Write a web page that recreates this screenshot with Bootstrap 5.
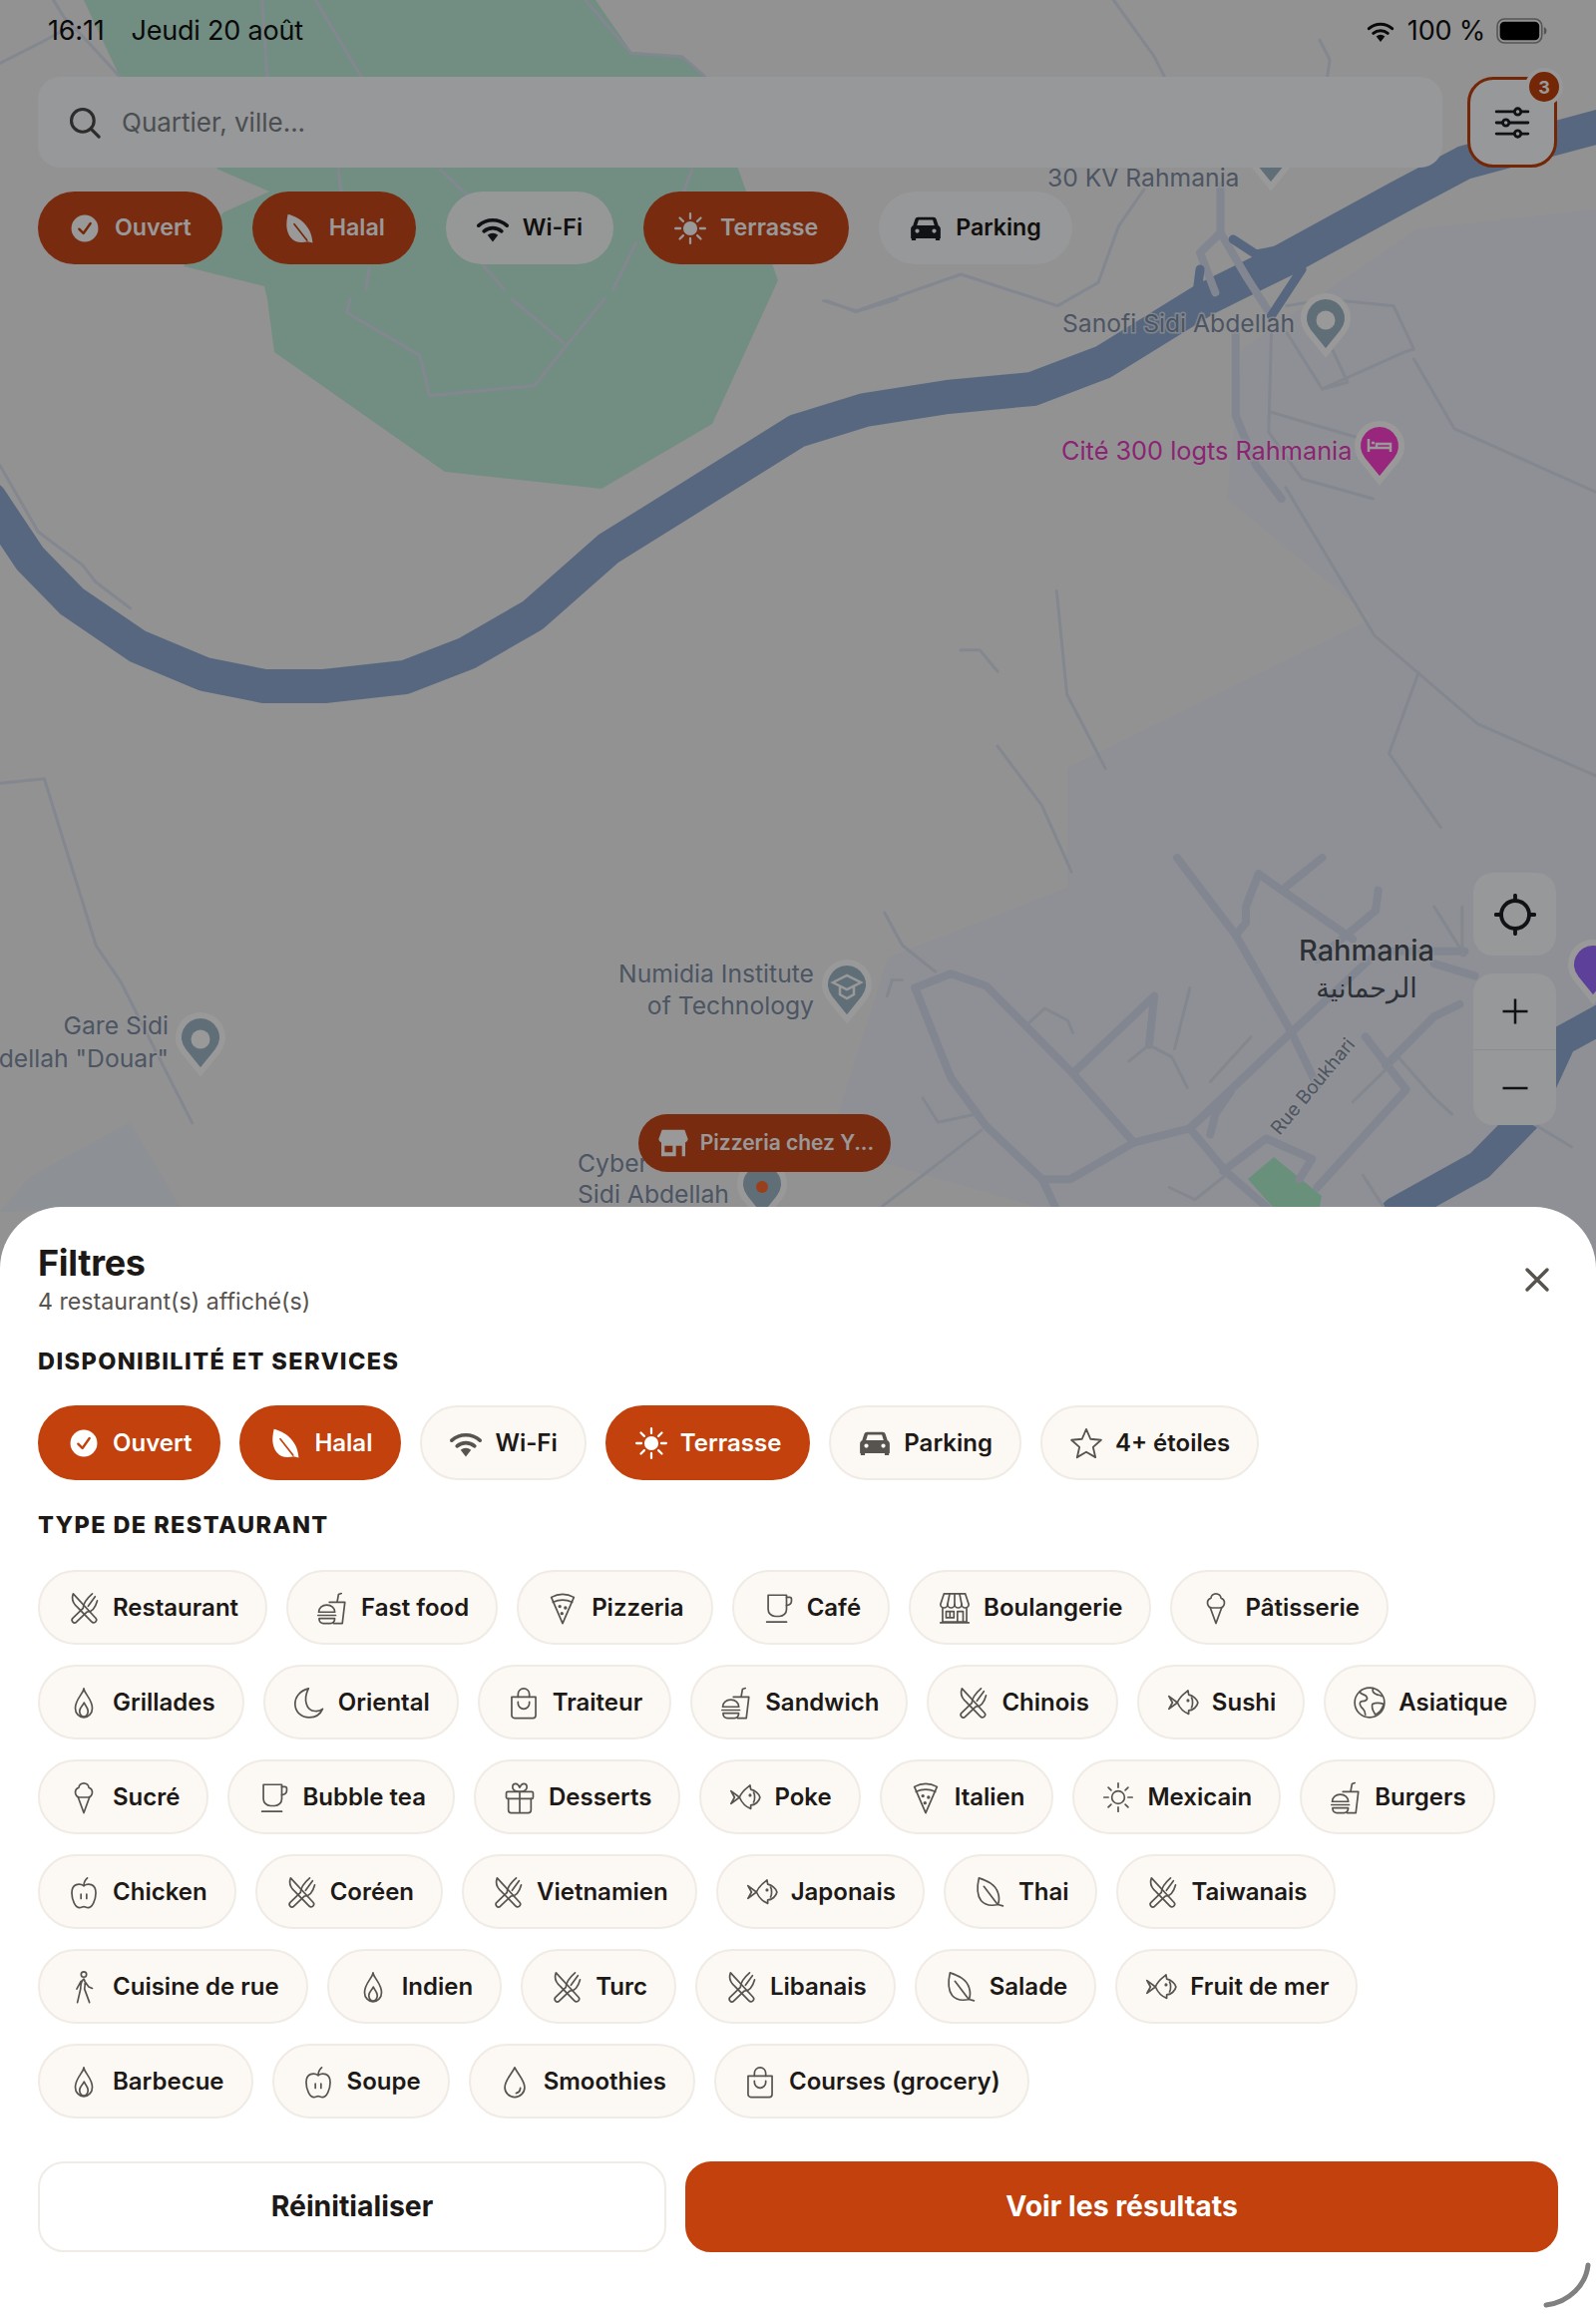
<!DOCTYPE html>
<html lang="fr">
<head>
    <meta charset="UTF-8">
    <meta name="viewport" content="width=device-width, initial-scale=1.0">
    <title>Filtres restaurants</title>
    <link href="https://cdn.jsdelivr.net/npm/bootstrap@5.3.0/dist/css/bootstrap.min.css" rel="stylesheet">
    <style>
        body { font-family: Inter, "Liberation Sans", sans-serif; color: #1c1917; overflow: hidden; background: #fff; }
        .screen { height: 2322px; position: relative; overflow: hidden; }

        /* map layer */
        .map-canvas { position: absolute; top: 0; left: 0; width: 1600px; height: 1300px; background: #f3f3f3; }
        .map-canvas polyline { fill: none; stroke-linejoin: round; stroke-linecap: round; vector-effect: non-scaling-stroke; }
        .road-thick polyline { stroke: #d9dff0; stroke-width: 8; }
        .road-thin polyline { stroke: #dbe1f0; stroke-width: 3; }
        .road-ramp polyline { stroke: #8facd4; stroke-width: 9; }
        .map-lbl { font-family: Inter, "Liberation Sans", sans-serif; font-size: 24.7px; fill: #808ea6; paint-order: stroke; stroke: #f6f7fa; stroke-width: 3px; stroke-opacity: .7; }
        .map-lbl.magenta { fill: #e83cc0; font-size: 25.3px; }
        .map-lbl.city { font-size: 29px; font-weight: 500; fill: #4a515c; }
        .map-lbl.street { font-size: 19px; }
        .map-ar { font-family: "DejaVu Sans", sans-serif; font-size: 27px; fill: #4a515c; }
        .map-dim { position: absolute; top: 0; left: 0; right: 0; bottom: 0; background: rgba(0, 0, 0, .4); z-index: 3; }

        .place-tag { position: absolute; left: 640px; top: 1117px; height: 58px; width: 253px; background: #c9481a; color: #fff; font-size: 21px; font-weight: 600; z-index: 2; gap: 9px; }
        .place-tag svg { width: 36px; height: 32px; }
        .map-tools { position: absolute; left: 1477px; top: 875px; width: 83px; z-index: 2; gap: 18px; }
        .tool-box { background: #fcfdff; border-radius: 20px; color: #1c1f24; }
        .tool-btn { height: 83px; }
        .tool-btn.tall { height: 76px; }
        .tool-btn + .tool-btn { border-top: 1px solid #e9ebf1; }

        /* status bar */
        .status-line { position: relative; z-index: 4; height: 62px; padding: 0 48px; font-size: 27px; color: #0a0a0a; letter-spacing: -.2px; }
        .status-line .day { margin-left: 27px; }
        .status-right { gap: 11px; }
        .battery { width: 52px; height: 26px; }

        /* top bar */
        .top-area { position: relative; z-index: 2; padding: 15px 39px 0 38px; }
        .search-box { height: 91px; flex: 1; background: #fcfdff; border-radius: 22px; padding: 0 30px; gap: 20px; font-size: 26px; color: #7d8288; margin-right: 25px; }
        .search-box svg { width: 34px; height: 34px; color: #4a4a4c; }
        .filter-btn { width: 90px; height: 91px; background: #fcfdff; border: 3px solid #c2410c; border-radius: 26px; color: #1c1f24; }
        .filter-btn svg { width: 38px; height: 38px; }
        .count-dot { position: absolute; top: -12px; right: -9px; width: 38px; height: 38px; border-radius: 50%; background: #c2410c; border: 4px solid #fcfdff; color: #fff; font-size: 18px; font-weight: 700; }
        .map-chips { margin-top: 24px; gap: 30px; }
        .map-chips .fchip { height: 73px; border: 0; padding: 0 31px 0 30px; background: rgba(252, 253, 255, .97); gap: 13px; font-size: 23.2px; }
        .map-chips .fchip.on { background: #c9481a; }
        .map-chips .ico { color: #1c1f24; }
        .map-chips .on .ico { color: #fff; }

        /* sheet */
        .sheet { position: absolute; left: 0; right: 0; top: 1210px; bottom: 0; background: #fff; border-radius: 62px 62px 0 0; z-index: 5; padding: 34px 38px 0; }
        .sheet-title { font-size: 36px; line-height: 44px; font-weight: 700; letter-spacing: -.3px; margin: 0; }
        .sheet-sub { font-size: 23.2px; line-height: 30px; color: #57534e; margin: 2px 0 0; }
        .close-x { width: 30px; height: 30px; padding: 0; border: 0; background: none; color: #57534e; position: absolute; right: 44px; top: 58px; }
        .sect-head { font-size: 23.5px; line-height: 30px; font-weight: 800; letter-spacing: 1.4px; margin: 30px 0 29px; }
        .chip-wrap { gap: 19px; }
        .chip-wrap.grid-like { gap: 20px 19px; margin-top: 30px; }

        .fchip { height: 75px; padding: 0 27px; border: 2px solid #f0ebe5; background: #fcf8f3; border-radius: 38px; font-size: 24px; font-weight: 600; color: #1c1917; gap: 12px; }
        .fchip:hover { background: #fcf8f3; color: #1c1917; border-color: #f0ebe5; }
        .fchip.on, .fchip.on:hover { background: #c2410c; border-color: #c2410c; color: #fff; }
        .ico { width: 34px; height: 34px; flex: none; color: #57534e; }
        .fchip.on .ico { color: #fff; }

        .sheet-actions { margin-top: 43px; gap: 19px; }
        .act-btn { height: 91px; border-radius: 26px; font-size: 28.4px; font-weight: 700; }
        .act-reset { width: 630px; background: #fff; border: 2px solid #f0ebe5; color: #1c1917; }
        .act-go { flex: 1; background: #c2410c; border: 2px solid #c2410c; color: #fff; }
        .act-go:hover { background: #c2410c; color: #fff; }
        .grip { position: absolute; right: 4px; bottom: 8px; width: 50px; height: 46px; }
    </style>
</head>
<body>
    <!-- icon set -->
    <svg width="0" height="0" class="position-absolute">
        <defs>
            <symbol id="i-fork" viewBox="0 0 24 24"><g fill="none" stroke="currentColor" stroke-width="1.2" stroke-linejoin="round" stroke-linecap="round"><path d="M4.5 2C3.2 5.5 4.5 9 7.5 11.5L17.5 21.8a1.9 1.9 0 0 0 2.9-2.6z"/><path d="M11.5 12.3 4 19.5a1.9 1.9 0 0 0 2.6 2.7l7.600-7.300M14.200 14.900c3.500 0 6-3 7.300-7.900M11.500 12.300c0-3.300 2.500-6.800 6.500-10.300M15.100 10.800 20 4"/></g></symbol>
            <symbol id="i-food" viewBox="0 0 24 24"><g fill="none" stroke="currentColor" stroke-width="1.2" stroke-linejoin="round" stroke-linecap="round"><path d="M10 8h11l-1.800 15H13M15.500 8l1-5.500 2-.7"/><path d="M2.500 15c0-3 2.500-5 5.700-5s5.700 2 5.700 5zM2 17.300h12.500M2.800 19.500h11v.5a3 3 0 0 1-3 3H5.800a3 3 0 0 1-3-3z"/></g></symbol>
            <symbol id="i-pizza" viewBox="0 0 24 24"><g fill="none" stroke="currentColor" stroke-width="1.2" stroke-linejoin="round" stroke-linecap="round"><path d="M4 4.500C9 1.800 15 1.800 20 4.500L12 23z"/><path d="M5.200 8C9.500 6 14.500 6 18.800 8"/><circle cx="10" cy="11" r=".6"/><circle cx="14" cy="12" r=".6"/><circle cx="11.500" cy="16" r=".6"/></g></symbol>
            <symbol id="i-cup" viewBox="0 0 24 24"><g fill="none" stroke="currentColor" stroke-width="1.2" stroke-linejoin="round" stroke-linecap="round"><path d="M5 3h13v10a5 5 0 0 1-5 5h-3a5 5 0 0 1-5-5z"/><path d="M18 4.500h2.200A1.300 1.300 0 0 1 21.500 5.800v1.400A3 3 0 0 1 18.500 10.200H18M4 22h14"/></g></symbol>
            <symbol id="i-store" viewBox="0 0 24 24"><g fill="none" stroke="currentColor" stroke-width="1.2" stroke-linejoin="round" stroke-linecap="round"><path d="M4.500 2h15l2.500 7.500a2.500 2.500 0 0 1-5 0 2.500 2.500 0 0 1-5 0 2.500 2.500 0 0 1-5 0 2.500 2.500 0 0 1-5 0z"/><path d="M8.500 2 7 9.500M12 2v7.500M15.500 2 17 9.500M3.500 12.500V22h17v-9.500M2 22.500h20M14 22v-7.500h4V22M6 14.500h5.500V19H6zM8.700 14.500V19"/></g></symbol>
            <symbol id="i-ice" viewBox="0 0 24 24"><g fill="none" stroke="currentColor" stroke-width="1.2" stroke-linejoin="round" stroke-linecap="round"><path d="M12 2C10 2 8.500 3.500 8.500 5 7 5.500 6 7 6 8.500 6 10.500 7.500 12 9 12h6c1.500 0 3-1.500 3-3.500 0-1.500-1-3-2.500-3.500C15.500 3.500 14 2 12 2z"/><path d="M8 12l4 11 4-11"/></g></symbol>
            <symbol id="i-flame" viewBox="0 0 24 24"><g fill="none" stroke="currentColor" stroke-width="1.2" stroke-linejoin="round" stroke-linecap="round"><path d="M12 2c.5 4 6 7.500 6 14a6 6.500 0 0 1-12 0C6 9.500 11.500 6 12 2z"/><path d="M12.200 12c.6 2 2.800 3.500 2.800 6a3 4 0 0 1-6 0c0-2.500 2.600-4 3.200-6z"/></g></symbol>
            <symbol id="i-moon" viewBox="0 0 24 24"><g fill="none" stroke="currentColor" stroke-width="1.2" stroke-linejoin="round" stroke-linecap="round"><path d="M11.500 2C5.500 3.500 2 8 2 13c0 5.500 4.500 9.500 10 9.500 4.500 0 8-2.500 9.500-6-1.500 1.200-3.500 1.800-5.500 1.500C10 17.500 7.500 10 11.500 2z"/></g></symbol>
            <symbol id="i-bag" viewBox="0 0 24 24"><g fill="none" stroke="currentColor" stroke-width="1.2" stroke-linejoin="round" stroke-linecap="round"><path d="M3.500 8h17v13a2 2 0 0 1-2 2h-13a2 2 0 0 1-2-2z"/><path d="M8 8V6a4 4 0 0 1 8 0v2M8 11.500v1a4 4 0 0 0 8 0v-1"/></g></symbol>
            <symbol id="i-fish" viewBox="0 0 24 24"><g fill="none" stroke="currentColor" stroke-width="1.2" stroke-linejoin="round" stroke-linecap="round"><path d="M8 12c2-5 6-7 7.500-8.500L16 6.500c3 .5 6 3 6.500 5.500-.5 3-3.500 5.500-6.500 5.500V20c-3-1-6-3.500-8-8z"/><path d="M8 12 2 7.500 4.500 12 2 16.500zM18 8.500c1 1.500 1 5.500 0 7"/><circle cx="15.500" cy="10.500" r=".5"/></g></symbol>
            <symbol id="i-globe" viewBox="0 0 24 24"><g fill="none" stroke="currentColor" stroke-width="1.2" stroke-linejoin="round" stroke-linecap="round"><circle cx="12" cy="12" r="10.500"/><path d="M5 4.500c2 2.500 4 1.500 5 3.500s-1 3-3 3-2.500 2-1 4 3 2 3 5.500M14.500 1.800c-1 2.200 0 3.200 2 4.200s3 .5 4 1.500M14 13c2-1 5-1 8 0-1 3.500-3.500 6.500-6 7.500-1-2-3-4.500-2-7.500z"/></g></symbol>
            <symbol id="i-sun" viewBox="0 0 24 24"><g fill="none" stroke="currentColor" stroke-width="1.2" stroke-linecap="round"><circle cx="12" cy="12" r="4.500"/><path d="M12 2v3M12 19v3M2 12h3M19 12h3M5 5l2 2M17 17l2 2M5 19l2-2M17 7l2-2"/></g></symbol>
            <symbol id="i-gift" viewBox="0 0 24 24"><g fill="none" stroke="currentColor" stroke-width="1.2" stroke-linejoin="round" stroke-linecap="round"><path d="M3.500 8h17a1 1 0 0 1 1 1v3a1 1 0 0 1-1 1h-17a1 1 0 0 1-1-1V9a1 1 0 0 1 1-1z"/><path d="M4 13v8a2 2 0 0 0 2 2h12a2 2 0 0 0 2-2v-8M12 8v15M12 8C8 8 6.500 6 7 4c.5-2 3.500-2.500 5 1 1.500-3.500 4.500-3 5-1 .5 2-1 4-5 4z"/></g></symbol>
            <symbol id="i-apple" viewBox="0 0 24 24"><g fill="none" stroke="currentColor" stroke-width="1.2" stroke-linejoin="round" stroke-linecap="round"><path d="M12 7.500C9 5.500 3.500 6 3.500 12.500c0 5 2.500 10.500 5.500 10.500 1.500 0 2-.7 3-.7s1.500.7 3 .7c3 0 5.500-5.500 5.500-10.500C20.500 6 15 5.500 12 7.500z"/><path d="M12 7.500c0-2 .7-4 2.500-5.500M10 13.500v3M14 13.500v3"/></g></symbol>
            <symbol id="i-walk" viewBox="0 0 24 24"><g fill="none" stroke="currentColor" stroke-width="1.2" stroke-linejoin="round" stroke-linecap="round"><circle cx="12" cy="3.200" r="1.900"/><path d="M12 6.500c-1.500 1-2.300 3.500-2.300 7L7.500 23M12 6.500c1 1 1 4 .5 7L16 23M12.500 8l3 4 2.500 1M10 8l-3 5.500"/></g></symbol>
            <symbol id="i-drop" viewBox="0 0 24 24"><g fill="none" stroke="currentColor" stroke-width="1.2" stroke-linejoin="round" stroke-linecap="round"><path d="M12 2C10 6.500 5 11 5 16a7 7 0 0 0 14 0c0-5-5-9.500-7-14z"/><path d="M16 16.500a4 4 0 0 1-3 3.700"/></g></symbol>
            <symbol id="i-leaf" viewBox="0 0 24 24"><g fill="none" stroke="currentColor" stroke-width="1.2" stroke-linejoin="round" stroke-linecap="round"><path d="M4.500 2C3 8.500 3 14 6 18c3 3.500 7 4 12 2.800l3.500 1M4.500 2c6 2 11.500 4.500 13.500 10.500 1 3 .8 6 0 8.300M8 8l9.500 12.500"/></g></symbol>
            <symbol id="i-star" viewBox="0 0 24 24"><path d="M12 2l3 7 7.500.7-5.700 5 1.700 7.300L12 18.200 5.500 22l1.700-7.300-5.700-5L9 9z" fill="none" stroke="currentColor" stroke-width="1.3" stroke-linejoin="round"/></symbol>
            <symbol id="f-check" viewBox="0 0 24 24"><circle cx="12" cy="12" r="9.500" fill="#fff"/><path d="M8 12.500l3 3 5-7" fill="none" stroke="#c2410c" stroke-width="1.700" stroke-linecap="round" stroke-linejoin="round"/></symbol>
            <symbol id="f-leaf" viewBox="0 0 24 24"><path d="M4 2C2.500 8.500 2.500 14 6 18.500c3 3.500 7 4 12 2.800l3.500 1C21 12 14 4.500 4 2z" fill="currentColor"/><path d="M8.500 9l9 11.500" stroke="#c2410c" stroke-width="1.200" stroke-linecap="round"/></symbol>
            <symbol id="f-wifi" viewBox="0 0 24 24"><g fill="none" stroke="currentColor" stroke-width="2.600" stroke-linecap="round"><path d="M2 10a15 15 0 0 1 20 0M5.800 14a9.500 9.500 0 0 1 12.400 0"/></g><path d="M8.300 16.700a5.500 5.500 0 0 1 7.400 0L12 21.500z" fill="currentColor"/></symbol>
            <symbol id="f-sun" viewBox="0 0 24 24"><circle cx="12" cy="12" r="5" fill="currentColor"/><path d="M12 1.500v3.500M12 19v3.500M1.500 12H5M19 12h3.500M4.600 4.600 7 7M17 17l2.400 2.400M4.600 19.400 7 17M17 7l2.400-2.400" stroke="currentColor" stroke-width="1.600" stroke-linecap="round"/></symbol>
            <symbol id="f-car" viewBox="0 0 24 24"><path fill="currentColor" fill-rule="evenodd" d="M6.500 4h11c1 0 1.700.6 2 1.500L21 10c1 .5 1.500 1.300 1.500 2.500V19h-.5v1.500h-3V19H5v1.500H2V19h-.5v-6.500c0-1.200.5-2 1.500-2.500l1.500-4.500C4.800 4.600 5.500 4 6.500 4zM7 6l-1.200 3.800h12.400L17 6zM6 12.300a1.500 1.500 0 1 0 0 3 1.500 1.500 0 0 0 0-3zM18 12.300a1.500 1.500 0 1 0 0 3 1.500 1.500 0 0 0 0-3z"/></symbol>
            <symbol id="f-store" viewBox="0 0 24 24"><path fill="currentColor" fill-rule="evenodd" d="M3.500 2h17L23 9a3 3 0 0 1-2 2.700V22H3V11.700A3 3 0 0 1 1 9zM5.500 14v5h6v-5zM14 14v8h4.500v-8z"/></symbol>
        </defs>
    </svg>

    <div class="screen">
        <!-- map background, coordinates are page pixels -->
        <svg class="map-canvas" viewBox="0 0 1600 1300">
            <polygon fill="#eff0f8" points="1600,210 1420,230 1245,350 1230,500 1375,620 1070,770 1070,890 890,960 830,1150 1040,1210 1600,1300"/>
            <polygon fill="#bfecd8" points="84,0 120,77 219,170 270,192 224,213 184,267 265,287 268,300 275,353 446,473 603,490 714,425 780,281 707,77 684,57 633,52 597,0"/>
            <polygon fill="#ebf0f7" points="0,1215 30,1180 130,1125 180,1210"/>
            <polygon fill="#b0f0ce" points="1251,1182 1277,1160 1325,1199 1322,1215 1280,1215"/>

            <polyline stroke="#8facd4" stroke-width="34" points="-10,500 30,560 72,603 138,648 205,676 265,688 325,688 406,679 468,655 534,617 610,550 695,497 799,432 867,411 950,398 1035,390 1106,363 1208,300 1285,262 1402,198 1468,163 1610,125"/>
            <g transform="translate(800 860) scale(.5102 .408)">
                <polyline stroke="#8facd4" stroke-width="30" points="1610,375 1500,450 1430,640 1340,755 1175,870"/>
            </g>

            <g transform="translate(800 860) scale(.5102 .408)">
                <g class="road-thick">
                    <polyline points="745,0 860,190 970,430 1020,560"/>
                    <polyline points="905,40 880,120 880,160 860,190"/>
                    <polyline points="905,40 1090,200"/>
                    <polyline points="230,320 300,285 370,315 540,530 660,700"/>
                    <polyline points="230,320 300,540 370,660 480,790 505,857"/>
                    <polyline points="540,530 700,340 690,460"/>
                    <polyline points="480,790 535,790 660,700 770,665 960,440 1140,230 1310,230"/>
                    <polyline points="770,665 840,770 920,857"/>
                    <polyline points="835,770 920,690 1010,740 985,790"/>
                    <polyline points="810,680 820,630 850,575 770,665"/>
                    <polyline points="1020,810 1195,570 1115,440"/>
                    <polyline points="1155,510 1250,390 1300,360"/>
                    <polyline points="1250,260 1330,290"/>
                    <polyline points="960,70 1030,0"/>
                    <polyline points="1140,80 1135,130 1020,250"/>
                </g>
                <g class="road-thin">
                    <polyline points="170,135 205,215 270,280"/>
                    <polyline points="245,590 275,650 350,630"/>
                    <polyline points="165,857 360,670"/>
                    <polyline points="450,410 485,370 530,400 540,430"/>
                    <polyline points="650,500 690,460 735,490 765,565"/>
                    <polyline points="740,470 770,320"/>
                    <polyline points="810,550 890,440"/>
                    <polyline points="1090,600 1180,490 1250,590 1285,630"/>
                    <polyline points="1110,780 1150,857"/>
                    <polyline points="730,810 780,840 840,780"/>
                    <polyline points="1440,650 1520,710"/>
                    <polyline points="1250,120 1310,240"/>
                    <polyline points="1305,120 1305,240"/>
                    <polyline points="175,340 185,300 205,300"/>
                </g>
            </g>
            <g transform="translate(800 0) scale(.5102 .3333)">
                <g class="road-thin">
                    <polyline points="620,0 700,170 720,230"/>
                    <polyline points="1025,120 1045,180 1040,230"/>
                    <polyline points="680,570 630,680 590,850 510,920 320,825 115,935 50,905"/>
                    <polyline points="930,1000 925,1300 990,1440 1130,1500"/>
                    <polyline points="930,1240 1130,1330"/>
                    <polyline points="960,1000 1030,1170 1190,1060 1210,1050 1170,920 1040,900 960,920"/>
                    <polyline points="1030,1170 1080,1150 1040,1020"/>
                    <polyline points="1210,1080 1290,1290 1568,1480"/>
                </g>
                <g class="road-thick">
                    <polyline points="830,560 830,700 880,830 930,950"/>
                    <polyline points="830,700 790,760 820,880"/>
                    <polyline points="860,1000 860,1250 900,1400 950,1500"/>
                </g>
                <g class="road-ramp">
                    <polyline points="855,720 900,765 950,750"/>
                    <polyline points="790,810 785,870 750,930"/>
                    <polyline points="990,810 930,950"/>
                </g>
            </g>
            <g transform="scale(.5102 .3333)">
                <g class="road-thin">
                    <polyline points="105,0 125,50 175,130 235,230"/>
                    <polyline points="0,190 90,120 125,90"/>
                    <polyline points="620,0 710,230"/>
                    <polyline points="515,0 525,230"/>
                    <polyline points="1150,0 1240,160 1340,170 1385,230"/>
                    <polyline points="665,510 670,575"/>
                    <polyline points="865,510 920,590"/>
                    <polyline points="1360,510 1340,590"/>
                    <polyline points="950,800 990,870"/>
                    <polyline points="725,810 720,870"/>
                    <polyline points="1250,730 1205,870"/>
                </g>
            </g>
            <g transform="translate(0 300) scale(.6378 .3333)">
                <g class="road-thin">
                    <polyline points="0,500 60,700 130,800 150,850 205,930"/>
                    <polyline points="550,0 545,40 660,170 675,290 840,260 890,140 950,0"/>
                    <polyline points="805,0 885,130"/>
                    <polyline points="1300,5 1345,38 1410,0"/>
                    <polyline points="1510,1055 1540,1055 1568,1120"/>
                </g>
            </g>
            <g transform="scale(1.4815)">
                <g class="road-thin">
                    <polyline points="0,530 30,527 65,640 82,665 130,760"/>
                    <polyline points="715,400 722,470 748,520"/>
                    <polyline points="675,505 705,545 725,590"/>
                    <polyline points="870,330 930,430 1000,490 1080,525"/>
                    <polyline points="960,455 940,510 975,560"/>
                </g>
            </g>

            <!-- pins -->
            <g fill="#a0b8c8" stroke="#fff" stroke-width="6">
                <path d="M1274 130a22 22 0 0 1 17 36l-17 21-17-21a22 22 0 0 1 17-36z"/>
                <path d="M1329 297a22 22 0 0 1 17 36l-17 21-17-21a22 22 0 0 1 17-36z"/>
                <path d="M849 965a22 22 0 0 1 17 36l-17 21-17-21a22 22 0 0 1 17-36z"/>
                <path d="M201 1018a22 22 0 0 1 17 36l-17 21-17-21a22 22 0 0 1 17-36z"/>
                <path d="M764 1165a22 22 0 0 1 17 36l-17 21-17-21a22 22 0 0 1 17-36z"/>
                <path fill="#ff40d0" d="M1383 425a22 22 0 0 1 17 36l-17 21-17-21a22 22 0 0 1 17-36z"/>
                <path fill="#9a6bff" d="M1597 945a22 22 0 0 1 17 36l-17 21-17-21a22 22 0 0 1 17-36z"/>
            </g>
            <circle cx="1329" cy="321" r="9.500" fill="#fff"/>
            <circle cx="201" cy="1042" r="9.500" fill="#fff"/>
            <circle cx="764" cy="1190" r="6" fill="#ff6a30"/>
            <path d="M835 985l14-7 14 7-14 7zM842 989v8l7 4 7-4v-8" fill="none" stroke="#fff" stroke-width="2.500"/>
            <path d="M1372 440v13M1372 449h22v4M1394 449v-4h-14v4M1375 444h3" fill="none" stroke="#fff" stroke-width="2.500"/>

            <!-- labels -->
            <text class="map-lbl" x="1050" y="187">30 KV Rahmania</text>
            <text class="map-lbl" x="1065" y="333">Sanofi Sidi Abdellah</text>
            <text class="map-lbl magenta" x="1064" y="461">Cité 300 logts Rahmania</text>
            <text class="map-lbl" x="816" y="985" text-anchor="end">Numidia Institute</text>
            <text class="map-lbl" x="816" y="1017" text-anchor="end">of Technology</text>
            <text class="map-lbl" x="169" y="1037" text-anchor="end">Gare Sidi</text>
            <text class="map-lbl" x="169" y="1070" text-anchor="end">dellah "Douar"</text>
            <text class="map-lbl" x="579" y="1175">Cyber</text>
            <text class="map-lbl" x="579" y="1206">Sidi Abdellah</text>
            <text class="map-lbl city" x="1370" y="963" text-anchor="middle">Rahmania</text>
            <text class="map-ar" x="1370" y="1000" text-anchor="middle" direction="rtl">الرحمانية</text>
            <text class="map-lbl street" transform="translate(1317 1090) rotate(-50)" text-anchor="middle" dominant-baseline="middle">Rue Boukhari</text>
        </svg>

        <div class="place-tag rounded-pill d-flex align-items-center justify-content-center">
            <svg><use href="#f-store"/></svg>Pizzeria chez Y...
        </div>

        <div class="map-tools d-flex flex-column">
            <div class="tool-box tool-btn d-flex align-items-center justify-content-center">
                <svg width="42" height="42" viewBox="0 0 24 24" fill="none" stroke="currentColor" stroke-width="2.200" stroke-linecap="round"><circle cx="12" cy="12" r="8"/><path d="M12 1v3M12 20v3M1 12h3M20 12h3"/></svg>
            </div>
            <div class="tool-box d-flex flex-column">
                <div class="tool-btn tall d-flex align-items-center justify-content-center">
                    <svg width="30" height="30" viewBox="0 0 24 24" fill="none" stroke="currentColor" stroke-width="2"><path d="M12 2v20M2 12h20"/></svg>
                </div>
                <div class="tool-btn tall d-flex align-items-center justify-content-center">
                    <svg width="30" height="30" viewBox="0 0 24 24" fill="none" stroke="currentColor" stroke-width="2"><path d="M2 12h20"/></svg>
                </div>
            </div>
        </div>

        <div>
            <div class="status-line d-flex align-items-center">
                <span>16:11</span><span class="day">Jeudi 20 août</span>
                <span class="status-right ms-auto d-flex align-items-center">
                    <svg width="32" height="28" viewBox="0 0 24 24"><use href="#f-wifi"/></svg>
                    <span>100 %</span>
                    <svg class="battery" viewBox="0 0 50 25"><rect x="1" y="1" width="43" height="23" rx="7" fill="none" stroke="#555" stroke-width="1.500"/><rect x="3.500" y="3.500" width="38" height="18" rx="4.500" fill="#000"/><path d="M46 9c2 .5 2.500 2 2.500 3.500S48 15.500 46 16z" fill="#555"/></svg>
                </span>
            </div>
            <div class="top-area">
                <div class="d-flex">
                    <div class="search-box d-flex align-items-center">
                        <svg viewBox="0 0 24 24" fill="none" stroke="currentColor" stroke-width="2.200" stroke-linecap="round"><circle cx="10.500" cy="10.500" r="8"/><path d="M16.500 16.500 22 22"/></svg>
                        <span>Quartier, ville...</span>
                    </div>
                    <div class="filter-btn position-relative d-flex align-items-center justify-content-center">
                        <svg viewBox="0 0 24 24" fill="none" stroke="currentColor" stroke-width="1.800" stroke-linecap="round"><path d="M2 5h20M2 12h20M2 19h20"/><circle cx="15.500" cy="5" r="2" fill="#fcfdff"/><circle cx="8" cy="12" r="2" fill="#fcfdff"/><circle cx="15.500" cy="19" r="2" fill="#fcfdff"/></svg>
                        <span class="count-dot d-flex align-items-center justify-content-center">3</span>
                    </div>
                </div>
                <div class="map-chips d-flex">
                    <div class="btn fchip on d-inline-flex align-items-center"><svg class="ico"><use href="#f-check"/></svg>Ouvert</div>
                    <div class="btn fchip on d-inline-flex align-items-center"><svg class="ico"><use href="#f-leaf"/></svg>Halal</div>
                    <div class="btn fchip d-inline-flex align-items-center"><svg class="ico"><use href="#f-wifi"/></svg>Wi-Fi</div>
                    <div class="btn fchip on d-inline-flex align-items-center"><svg class="ico"><use href="#f-sun"/></svg>Terrasse</div>
                    <div class="btn fchip d-inline-flex align-items-center"><svg class="ico"><use href="#f-car"/></svg>Parking</div>
                </div>
            </div>
        </div>

        <div class="map-dim"></div>

        <!-- filter sheet -->
        <div class="sheet">
            <h1 class="sheet-title">Filtres</h1>
            <p class="sheet-sub">4 restaurant(s) affiché(s)</p>
            <button class="close-x" type="button" aria-label="Fermer">
                <svg width="30" height="30" viewBox="0 0 24 24" fill="none" stroke="currentColor" stroke-width="2.800" stroke-linecap="round"><path d="M4 4l16 16M20 4 4 20"/></svg>
            </button>

            <h2 class="sect-head">DISPONIBILITÉ ET SERVICES</h2>
            <div class="chip-wrap d-flex flex-wrap">
                <button class="btn fchip on d-inline-flex align-items-center"><svg class="ico"><use href="#f-check"/></svg>Ouvert</button>
                <button class="btn fchip on d-inline-flex align-items-center"><svg class="ico"><use href="#f-leaf"/></svg>Halal</button>
                <button class="btn fchip d-inline-flex align-items-center"><svg class="ico"><use href="#f-wifi"/></svg>Wi-Fi</button>
                <button class="btn fchip on d-inline-flex align-items-center"><svg class="ico"><use href="#f-sun"/></svg>Terrasse</button>
                <button class="btn fchip d-inline-flex align-items-center"><svg class="ico"><use href="#f-car"/></svg>Parking</button>
                <button class="btn fchip d-inline-flex align-items-center"><svg class="ico"><use href="#i-star"/></svg>4+ étoiles</button>
            </div>

            <h2 class="sect-head">TYPE DE RESTAURANT</h2>
            <div class="chip-wrap grid-like d-flex flex-wrap">
                <button class="btn fchip d-inline-flex align-items-center"><svg class="ico"><use href="#i-fork"/></svg>Restaurant</button>
                <button class="btn fchip d-inline-flex align-items-center"><svg class="ico"><use href="#i-food"/></svg>Fast food</button>
                <button class="btn fchip d-inline-flex align-items-center"><svg class="ico"><use href="#i-pizza"/></svg>Pizzeria</button>
                <button class="btn fchip d-inline-flex align-items-center"><svg class="ico"><use href="#i-cup"/></svg>Café</button>
                <button class="btn fchip d-inline-flex align-items-center"><svg class="ico"><use href="#i-store"/></svg>Boulangerie</button>
                <button class="btn fchip d-inline-flex align-items-center"><svg class="ico"><use href="#i-ice"/></svg>Pâtisserie</button>
                <button class="btn fchip d-inline-flex align-items-center"><svg class="ico"><use href="#i-flame"/></svg>Grillades</button>
                <button class="btn fchip d-inline-flex align-items-center"><svg class="ico"><use href="#i-moon"/></svg>Oriental</button>
                <button class="btn fchip d-inline-flex align-items-center"><svg class="ico"><use href="#i-bag"/></svg>Traiteur</button>
                <button class="btn fchip d-inline-flex align-items-center"><svg class="ico"><use href="#i-food"/></svg>Sandwich</button>
                <button class="btn fchip d-inline-flex align-items-center"><svg class="ico"><use href="#i-fork"/></svg>Chinois</button>
                <button class="btn fchip d-inline-flex align-items-center"><svg class="ico"><use href="#i-fish"/></svg>Sushi</button>
                <button class="btn fchip d-inline-flex align-items-center"><svg class="ico"><use href="#i-globe"/></svg>Asiatique</button>
                <button class="btn fchip d-inline-flex align-items-center"><svg class="ico"><use href="#i-ice"/></svg>Sucré</button>
                <button class="btn fchip d-inline-flex align-items-center"><svg class="ico"><use href="#i-cup"/></svg>Bubble tea</button>
                <button class="btn fchip d-inline-flex align-items-center"><svg class="ico"><use href="#i-gift"/></svg>Desserts</button>
                <button class="btn fchip d-inline-flex align-items-center"><svg class="ico"><use href="#i-fish"/></svg>Poke</button>
                <button class="btn fchip d-inline-flex align-items-center"><svg class="ico"><use href="#i-pizza"/></svg>Italien</button>
                <button class="btn fchip d-inline-flex align-items-center"><svg class="ico"><use href="#i-sun"/></svg>Mexicain</button>
                <button class="btn fchip d-inline-flex align-items-center"><svg class="ico"><use href="#i-food"/></svg>Burgers</button>
                <button class="btn fchip d-inline-flex align-items-center"><svg class="ico"><use href="#i-apple"/></svg>Chicken</button>
                <button class="btn fchip d-inline-flex align-items-center"><svg class="ico"><use href="#i-fork"/></svg>Coréen</button>
                <button class="btn fchip d-inline-flex align-items-center"><svg class="ico"><use href="#i-fork"/></svg>Vietnamien</button>
                <button class="btn fchip d-inline-flex align-items-center"><svg class="ico"><use href="#i-fish"/></svg>Japonais</button>
                <button class="btn fchip d-inline-flex align-items-center"><svg class="ico"><use href="#i-leaf"/></svg>Thai</button>
                <button class="btn fchip d-inline-flex align-items-center"><svg class="ico"><use href="#i-fork"/></svg>Taiwanais</button>
                <button class="btn fchip d-inline-flex align-items-center"><svg class="ico"><use href="#i-walk"/></svg>Cuisine de rue</button>
                <button class="btn fchip d-inline-flex align-items-center"><svg class="ico"><use href="#i-flame"/></svg>Indien</button>
                <button class="btn fchip d-inline-flex align-items-center"><svg class="ico"><use href="#i-fork"/></svg>Turc</button>
                <button class="btn fchip d-inline-flex align-items-center"><svg class="ico"><use href="#i-fork"/></svg>Libanais</button>
                <button class="btn fchip d-inline-flex align-items-center"><svg class="ico"><use href="#i-leaf"/></svg>Salade</button>
                <button class="btn fchip d-inline-flex align-items-center"><svg class="ico"><use href="#i-fish"/></svg>Fruit de mer</button>
                <button class="btn fchip d-inline-flex align-items-center"><svg class="ico"><use href="#i-flame"/></svg>Barbecue</button>
                <button class="btn fchip d-inline-flex align-items-center"><svg class="ico"><use href="#i-apple"/></svg>Soupe</button>
                <button class="btn fchip d-inline-flex align-items-center"><svg class="ico"><use href="#i-drop"/></svg>Smoothies</button>
                <button class="btn fchip d-inline-flex align-items-center"><svg class="ico"><use href="#i-bag"/></svg>Courses (grocery)</button>
            </div>

            <div class="sheet-actions d-flex">
                <button class="btn act-btn act-reset">Réinitialiser</button>
                <button class="btn act-btn act-go">Voir les résultats</button>
            </div>

            <svg class="grip" viewBox="0 0 50 46"><path d="M46 3C44 22 28 40 4 43" fill="none" stroke="#808080" stroke-width="5" stroke-linecap="round"/></svg>
        </div>
    </div>
</body>
</html>
